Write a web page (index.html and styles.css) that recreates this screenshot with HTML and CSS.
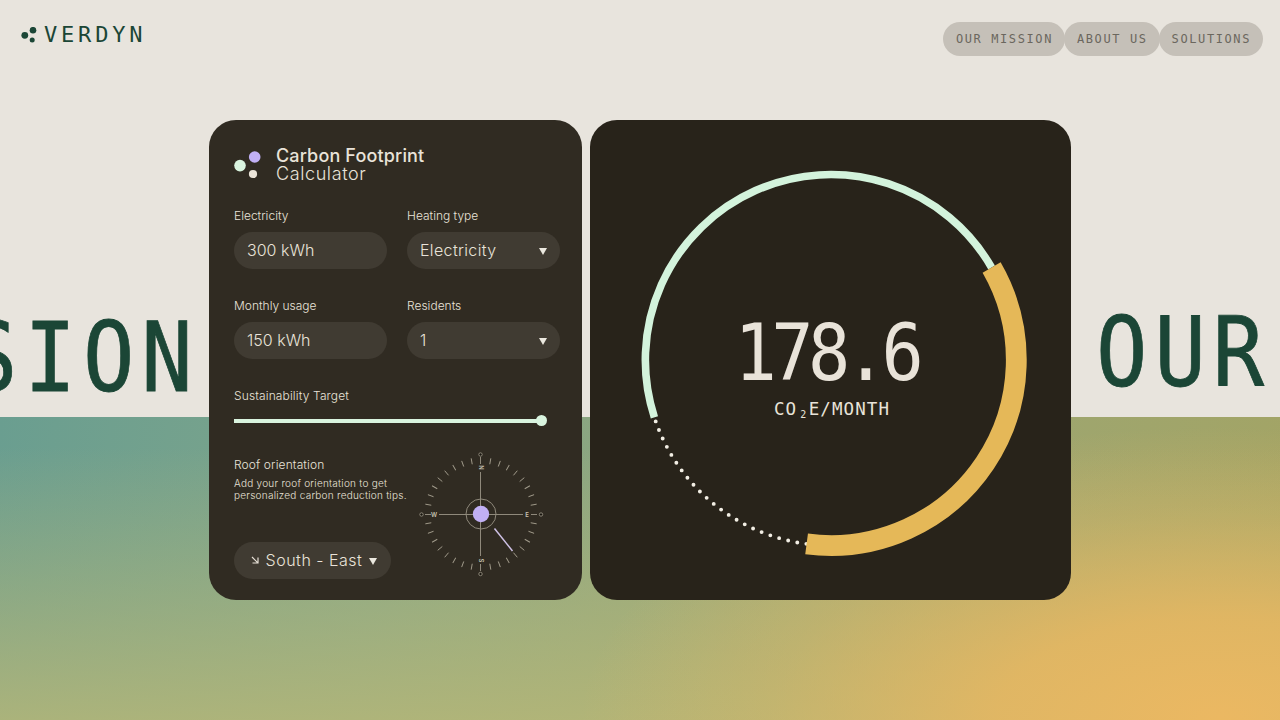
FILE: index.html
```html
<!DOCTYPE html>
<html lang="en">
<head>
    <meta charset="UTF-8">
    <title>Verdyn</title>
    <link rel="stylesheet" href="styles.css">
</head>
<body>
    <div class="page">
        <header class="header">
            <a class="logo">
                <svg width="17" height="16" viewBox="0 0 17 16" fill="#1b4636">
                    <circle cx="3.8" cy="8.3" r="3.4"/>
                    <circle cx="12" cy="3.2" r="3.3"/>
                    <circle cx="11.2" cy="13" r="2.5"/>
                </svg>
                <span class="logo-text">VERDYN</span>
            </a>
            <nav class="nav">
                <a>OUR MISSION</a>
                <a>ABOUT US</a>
                <a>SOLUTIONS</a>
            </nav>
        </header>
        <div class="marquee marquee-left">MISSION</div>
        <div class="marquee marquee-right">OUR</div>
        <div class="gradient"></div>
        <main class="cards">
            <section class="card form">
                <div class="title">
                    <svg width="27" height="30" viewBox="0 0 27 30">
                        <circle cx="6" cy="16.6" r="5.8" fill="#d9f4df"/>
                        <circle cx="20.7" cy="8" r="5.8" fill="#c1b0f5"/>
                        <circle cx="19" cy="25" r="4.1" fill="#ebe5d9"/>
                    </svg>
                    <h1><span class="t-carbon">Carbon Footprint</span><span class="t-calc">Calculator</span></h1>
                </div>
                <div class="fields">
                    <div class="field">
                        <label>Electricity</label>
                        <div class="input"><span>300 kWh</span></div>
                    </div>
                    <div class="field">
                        <label>Heating type</label>
                        <div class="input"><span class="v-elec">Electricity</span><i class="caret"></i></div>
                    </div>
                    <div class="field">
                        <label>Monthly usage</label>
                        <div class="input"><span>150 kWh</span></div>
                    </div>
                    <div class="field">
                        <label>Residents</label>
                        <div class="input"><span>1</span><i class="caret"></i></div>
                    </div>
                </div>
                <div class="target">
                    <label class="l-target">Sustainability Target</label>
                    <div class="slider"><i class="thumb"></i></div>
                </div>
                <div class="roof">
                    <div class="roof-info">
                        <label class="l-target">Roof orientation</label>
                        <p>Add your roof orientation to get<br>personalized carbon reduction tips.</p>
                        <div class="input direction">
                            <svg width="8" height="8" viewBox="0 0 8 8" fill="none" stroke="#e6e0d6" stroke-width="1.2">
                                <path d="M1 1 L6.6 6.6 M7 1.5 V7 H1.5"/>
                            </svg>
                            <span class="v-south">South - East</span>
                            <i class="caret"></i>
                        </div>
                    </div>
                    <svg class="compass" width="126" height="126" viewBox="-63 -63 126 126">
                        <g id="ticks" stroke="#a39d8d" stroke-width="0.9"></g>
                        <g stroke="#8f897b" stroke-width="1" fill="none">
                            <path d="M-.5 -42 V42 M-42 .5 H42 M-.5 -57 V-50 M-.5 50 V57 M-56 .5 H-50 M50 .5 H56"/>
                            <circle cx="0" cy="0" r="15"/>
                        </g>
                        <g fill="#17140e" stroke="#a39d8d" stroke-width="0.8">
                            <circle cx="-.5" cy="-59.5" r="1.7"/>
                            <circle cx="-.5" cy="60" r="1.7"/>
                            <circle cx="-59.5" cy=".5" r="1.7"/>
                            <circle cx="60" cy=".5" r="1.7"/>
                        </g>
                        <g class="points">
                            <text transform="translate(-.5 -46.5) rotate(90)" y="2">N</text>
                            <text transform="translate(-.5 46.5) rotate(90)" y="2">S</text>
                            <text x="-47" y="2.5">W</text>
                            <text x="46" y="2.5">E</text>
                        </g>
                        <circle cx="0" cy="0" r="8.2" fill="#c1b0f5"/>
                        <path d="M13.5 14.5 L31.5 37" stroke="#cfc2e6" stroke-width="1.5"/>
                    </svg>
                </div>
            </section>
            <section class="card result">
                <svg class="ring" width="481" height="480" viewBox="0 0 481 480" fill="none">
                    <path d="M64.4 297.3 A185.5 185.5 0 0 1 401.6 147.5" stroke="#d3f3dc" stroke-width="7.6"/>
                    <path d="M65.7 301.4 A185.5 185.5 0 0 0 216.6 423.9" stroke="#f2eee4" stroke-width="3.9" stroke-linecap="round" stroke-dasharray="0 9.28"/>
                    <path d="M401.6 147.5 A185.5 185.5 0 0 1 216.6 423.9" stroke="#e5b858" stroke-width="20.8"/>
                </svg>
                <div class="total">
                    <div class="amount">178.6</div>
                    <div class="unit">CO<span class="sub">2</span>E/MONTH</div>
                </div>
            </section>
        </main>
    </div>
    <script>
        // small marks round the compass, skipping N, E, S and W
        var ticks = '';
        for (var i = 0; i < 36; i++) {
            if (i % 9 == 0) continue;
            ticks += '<line x1="0" y1="-56.5" x2="0" y2="-50.5" transform="rotate(' + i * 10 + ')"/>';
        }
        document.getElementById('ticks').innerHTML = ticks;
    </script>
</body>
</html>
```
FILE: styles.css
```css
* {
    margin: 0;
    padding: 0;
    box-sizing: border-box;
}
body {
    font-family: Inter, "Open Sans", sans-serif;
    font-weight: 300;
    color: #e9e3d9;
}
.page {
    position: relative;
    width: 1280px;
    height: 720px;
    overflow: hidden;
    background: #e8e4dd;
}
.header {
    display: flex;
    justify-content: space-between;
    align-items: flex-start;
    padding: 22px 17px 0 21px;
    height: 120px;
    font-family: "DejaVu Sans Mono", monospace;
}
.logo {
    display: flex;
    align-items: center;
    gap: 6px;
    height: 25px;
    color: #1b4636;
}
.logo-text {
    font-size: 22px;
    letter-spacing: 3.8px;
}
.nav {
    display: flex;
}
.nav a {
    height: 34px;
    padding: 0 12px 0 13px;
    margin-right: -1px;
    border-radius: 17px;
    background: #c5c0b8;
    color: #6b675e;
    font-size: 12px;
    letter-spacing: 1.6px;
    line-height: 35px;
}
.nav a:last-child {
    margin-right: 0;
}
/* oversized words running behind the cards */
.marquee {
    position: absolute;
    font: 97px/114px "DejaVu Sans Mono", monospace;
    letter-spacing: 8px;
    color: #1b4636;
    -webkit-text-stroke: .8px #1b4636;
    white-space: nowrap;
}
.marquee-left {
    right: 1080px;
    top: 301px;
    transform: scaleX(.88);
    transform-origin: right;
}
.marquee-right {
    left: 1096px;
    top: 296px;
    transform: scaleX(.88);
    transform-origin: left;
}
.gradient {
    position: absolute;
    left: 0;
    right: 0;
    top: 417px;
    bottom: 0;
    background:
        radial-gradient(ellipse 640px 290px at 1220px 300px, #ebb862 0%, rgba(232, 183, 97, .85) 35%, rgba(226, 182, 98, .35) 70%, rgba(220, 180, 100, 0) 100%),
        linear-gradient(180deg, rgba(186, 184, 118, 0) 10%, rgba(186, 184, 118, .4) 55%, rgba(186, 184, 118, .8) 100%),
        linear-gradient(98deg, #6a9e90 0%, #7fa58a 30%, #9ba775 65%, #a3a465 100%);
}
.cards {
    position: relative;
    display: flex;
    gap: 8px;
    padding-left: 209px;
}
.card {
    height: 480px;
    border-radius: 27px;
}
.form {
    width: 373px;
    padding: 24.5px 22px 0 25px;
    background: #302b22;
}
.title {
    display: flex;
    gap: 15px;
    height: 64px;
}
.title svg {
    margin-top: 4px;
}
h1 {
    font-size: 18px;
    line-height: 18px;
    padding-top: 2px;
}
h1 span {
    display: block;
}
.t-carbon {
    font-weight: 500;
    letter-spacing: .15px;
}
.t-calc {
    font-weight: 300;
    letter-spacing: .6px;
}
.fields {
    display: grid;
    grid-template-columns: 153px 153px;
    column-gap: 20px;
}
.field {
    height: 90px;
}
label {
    display: block;
    font-size: 12px;
    font-weight: 350;
    line-height: 14px;
}
.l-target {
    letter-spacing: .13px;
}
.input {
    display: flex;
    align-items: center;
    justify-content: space-between;
    height: 37px;
    margin-top: 9px;
    padding: 0 13px;
    border-radius: 19px;
    background: #403b32;
    font-size: 16px;
}
.v-elec {
    letter-spacing: .35px;
}
.caret {
    margin-top: 2px;
    border: 4px solid transparent;
    border-top: 7px solid #ebe8df;
    border-bottom: 0;
}
.target {
    height: 69px;
}
.slider {
    position: relative;
    width: 308px;
    height: 4px;
    margin-top: 16.5px;
    background: #d9f4df;
}
.thumb {
    position: absolute;
    right: -5px;
    top: -4px;
    width: 11px;
    height: 11px;
    border-radius: 50%;
    background: #d9f4df;
}
.roof {
    display: flex;
}
.roof-info {
    width: 184px;
}
.roof p {
    margin-top: 5.5px;
    font-size: 10px;
    font-weight: 350;
    line-height: 12px;
    letter-spacing: .25px;
    white-space: nowrap;
}
.direction {
    width: 157px;
    margin-top: 40.5px;
    padding: 0 14px 0 17px;
}
.v-south {
    letter-spacing: .5px;
}
.compass {
    flex: none;
    margin-top: -6.5px;
}
.points {
    fill: #c9c3b4;
    font-size: 6px;
    font-weight: 600;
    text-anchor: middle;
}
.result {
    position: relative;
    width: 481px;
    background: #28231a;
}
.ring {
    display: block;
}
.total {
    position: absolute;
    left: 0;
    right: 0;
    top: 192px;
    font-family: "DejaVu Sans Mono", monospace;
    text-align: center;
}
.amount {
    font-size: 78px;
    line-height: 82px;
    letter-spacing: -6.1px;
    text-indent: -9px;
    transform: scaleX(.9);
}
.unit {
    margin-top: 5px;
    font-size: 17.5px;
    line-height: 20px;
    letter-spacing: 1.1px;
    text-indent: 3px;
}
.sub {
    display: inline-block;
    width: 11.5px;
    font-size: 10px;
    text-indent: 2px;
    transform: translateY(3px);
}
```
